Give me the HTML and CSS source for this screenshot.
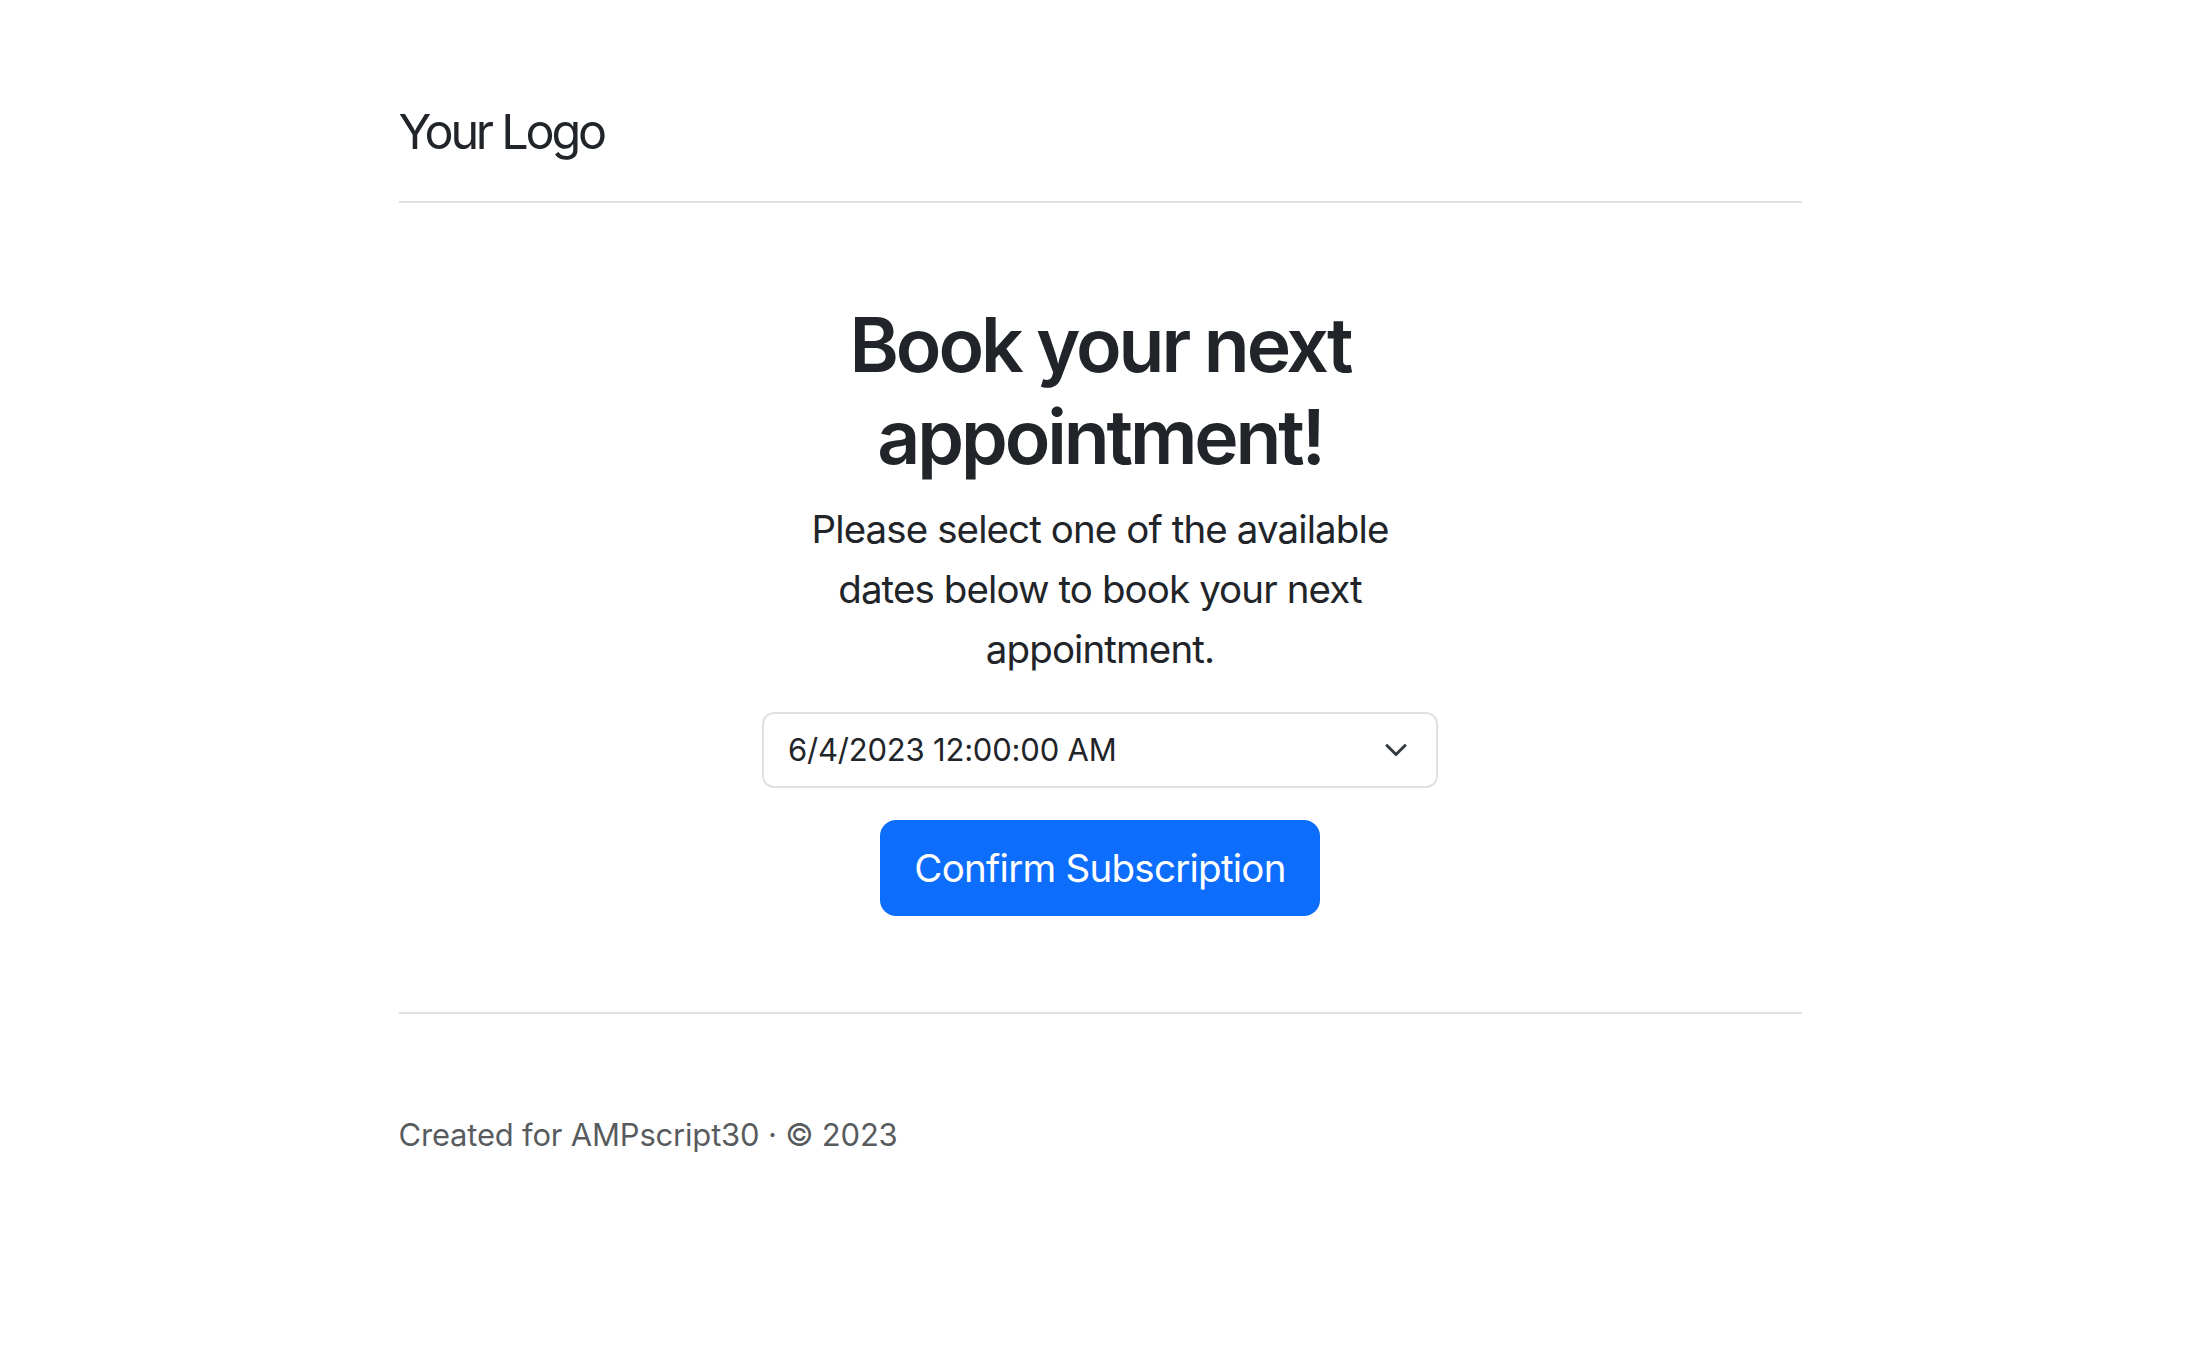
FILE: index.html
```html
<!DOCTYPE html>
<html>
<head>
	<meta charset="utf-8">
	<title>Book your next appointment</title>
	<link rel="stylesheet" href="styles.css">
</head>
<body>
	<div class="container">
		<header class="header">
			<span class="logo">Your Logo</span>
		</header>
		<main class="hero">
			<div class="hero-col">
				<h1>Book your next appointment!</h1>
				<p class="lead">Please select one of the available dates below to book your next appointment.</p>
				<form class="book-form">
					<div class="select-wrap">
						<select class="form-select">
							<option>6/4/2023 12:00:00 AM</option>
						</select>
						<svg class="chevron" width="24" height="24" viewBox="0 0 16 16"><path d="M2 5l6 6 6-6" fill="none" stroke="#343a40" stroke-width="2" stroke-linecap="round" stroke-linejoin="round"/></svg>
					</div>
					<button type="button" class="btn">Confirm Subscription</button>
				</form>
			</div>
		</main>
		<footer class="footer">
			<p>Created for AMPscript30 &middot; &copy; 2023</p>
		</footer>
	</div>
</body>
</html>
```

FILE: styles.css
```css
*{margin: 0;padding: 0;box-sizing: border-box;}
body{ font-family: Inter, "Liberation Sans", sans-serif; color: #212529; background: #fff; font-size: 31px; line-height: 1.5;}
.container{ width: 1403px; margin: 0 auto;}

.header{ padding: 94px 0 32px; border-bottom: 2px solid #dee2e6;}
.logo{ font-size: 48.5px; line-height: 75px; letter-spacing: -3.2px; display: block;}

.hero{ padding: 96px 0; text-align: center; border-bottom: 2px solid #dee2e6;}
.hero-col{ width: 676px; margin: 0 auto;}
.hero h1{ font-size: 75px; line-height: 92.4px; font-weight: 600; letter-spacing: -3.1px; margin-bottom: 15px;}
.lead{ font-size: 38.5px; line-height: 60px; letter-spacing: -0.9px; margin-bottom: 33px;}

.book-form{ display: flex; flex-direction: column; align-items: center; gap: 32px;}
.select-wrap{ position: relative; width: 100%;}
.form-select{ display: block; width: 100%; height: 76px; padding: 12px 64px 12px 24px; font: inherit; font-size: 31px; line-height: 48px; letter-spacing: -0.2px; color: #212529; background: #fff; border: 2px solid #dee2e6; border-radius: 12px; appearance: none; -webkit-appearance: none; outline: none;}
.chevron{ position: absolute; right: 30px; top: 26px; pointer-events: none;}

.btn{ font: inherit; font-size: 38.5px; line-height: 60px; letter-spacing: -0.75px; color: #fff; background: #0d6efd; border: 2px solid #0d6efd; border-radius: 16px; padding: 16px 32px; cursor: pointer;}

.footer{ padding: 97px 0 96px;}
.footer p{ color: rgba(33,37,41,.75); font-size: 31px; line-height: 48px; letter-spacing: -0.2px;}
```
